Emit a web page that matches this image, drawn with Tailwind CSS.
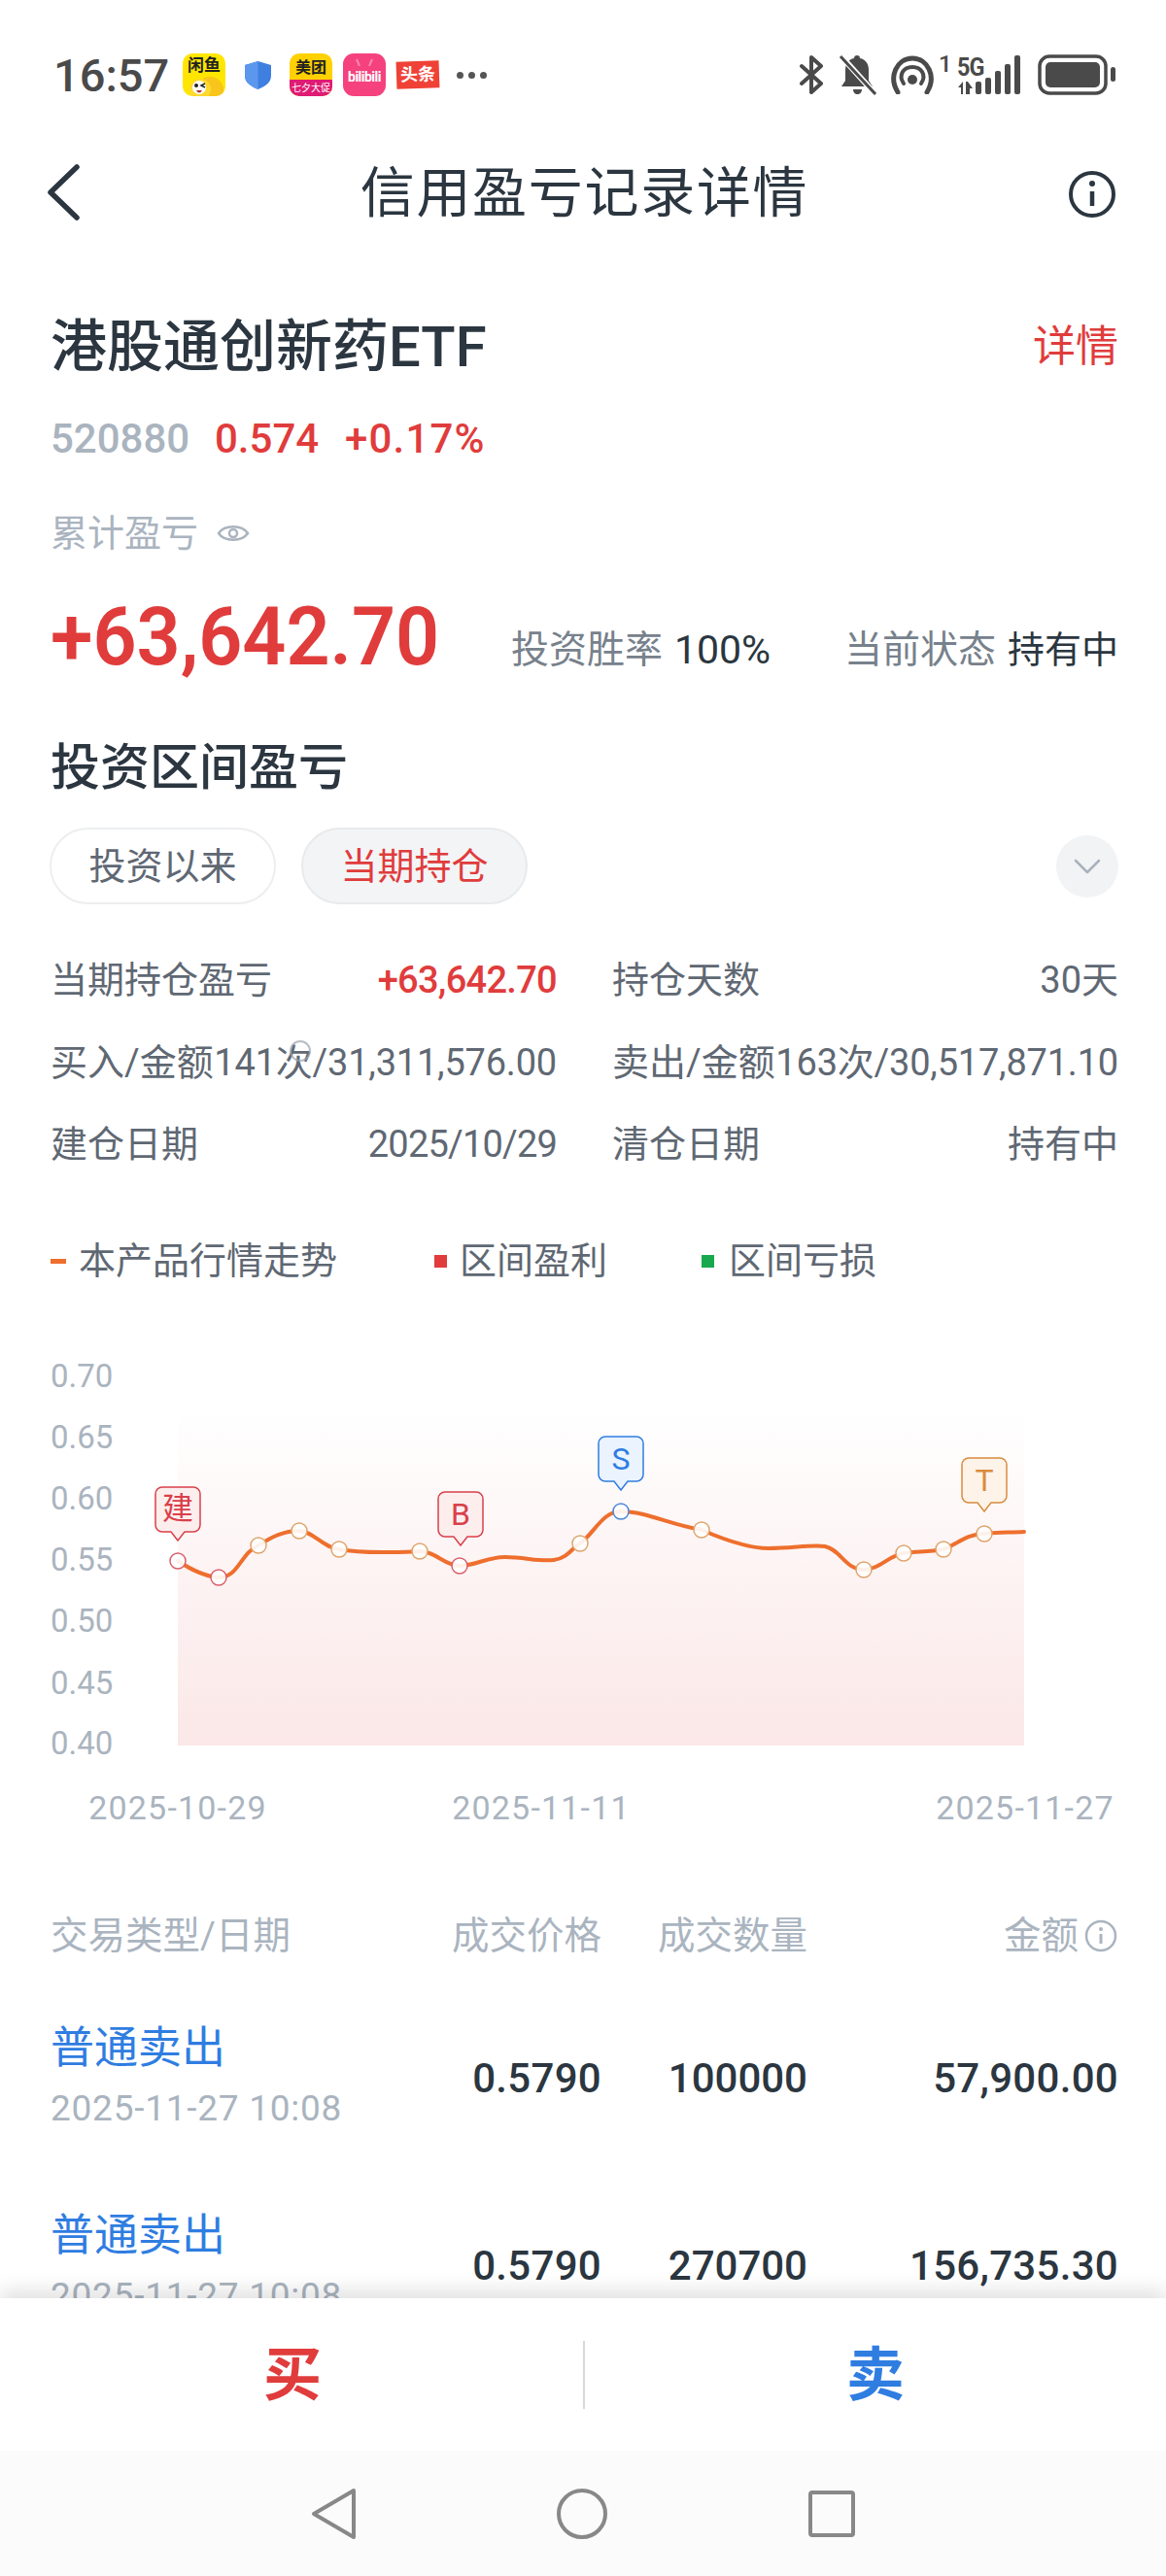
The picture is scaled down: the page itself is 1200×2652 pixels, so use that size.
<!DOCTYPE html>
<html lang="zh-CN">
<head>
  <meta charset="UTF-8" />
  <meta name="viewport" content="width=device-width, initial-scale=1.0"/>
  <script src="https://cdn.jsdelivr.net/npm/@tailwindcss/browser@4"></script>
  <title>信用盈亏记录详情</title>
</head>
<body class="bg-white">
<div class="w-[1200px] h-[2652px] flex flex-col overflow-hidden font-[Roboto,'Noto_Sans_CJK_SC',sans-serif] text-[#2b3640]">

  <!-- Status bar -->
  <div class="h-[154px] shrink-0 flex items-center relative">
    <span class="ml-[55px] w-[125px] text-[47px] font-medium text-[#4a4a4a] leading-none">16:57</span>
    <div class="ml-[8px] w-[44px] h-[44px] rounded-[10px] bg-[#ffe600] flex flex-col items-center overflow-hidden">
      <span class="text-[17px] font-bold leading-[19px] text-[#222] mt-[3px]">闲鱼</span>
      <svg width="40" height="22" viewBox="0 0 40 22"><circle cx="26" cy="16" r="14" fill="#f7c51c"/><circle cx="16" cy="15" r="11" fill="#ffd92e"/><circle cx="15" cy="13" r="7" fill="#fff"/><circle cx="12" cy="11" r="2" fill="#222"/><path d="M21 9l-4 2 4 2" stroke="#222" stroke-width="1.500" fill="none"/><path d="M12 16q3 5 6 0z" fill="#a33"/></svg>
    </div>
    <svg class="ml-[20px]" width="27" height="29" viewBox="0 0 27 29"><path d="M13.500 0L27 4v11c0 7-6 11-13.500 14C6 26 0 22 0 15V4z" fill="#3f7fe0"/><path d="M13.500 0L0 4v11c0 7 6 11 13.500 14z" fill="#5c97ee"/></svg>
    <div class="ml-[19px] w-[44px] h-[44px] rounded-[10px] bg-[#ffd100] flex flex-col items-center overflow-hidden">
      <span class="text-[16px] font-bold leading-[24px] text-[#222] mt-[3px]">美团</span>
      <span class="w-full h-[17px] bg-[#df1b73] text-white text-[10px] leading-[17px] text-center">七夕大促</span>
    </div>
    <div class="relative ml-[11px] w-[44px] h-[44px] rounded-[11px] bg-[#f5427e] flex items-center justify-center">
      <svg class="absolute left-[12px] top-[5px]" width="20" height="8" viewBox="0 0 20 8" fill="none" stroke="#ff86ac" stroke-width="2"><path d="M5 8L2 1M15 8l3-7"/></svg>
      <span class="mt-[3px] text-[14px] font-bold text-white leading-none tracking-[-0.5px]">bilibili</span>
    </div>
    <div class="ml-[11px] w-[44px] h-[28px] bg-[#ef4136] -rotate-2 flex items-center justify-center">
      <span class="text-[18px] font-bold text-white leading-none">头条</span>
    </div>
    <div class="ml-[18px] flex gap-[5px]">
      <span class="w-[7px] h-[7px] rounded-full bg-[#555]"></span>
      <span class="w-[7px] h-[7px] rounded-full bg-[#555]"></span>
      <span class="w-[7px] h-[7px] rounded-full bg-[#555]"></span>
    </div>

    <div class="ml-auto mr-[52px] flex items-center">
      <!-- bluetooth -->
      <svg width="27" height="40" viewBox="0 0 27 40" fill="none" stroke="#4a4a4a" stroke-width="4" stroke-linejoin="round" stroke-linecap="round"><path d="M3 11l20 18-10 9V2l10 9L3 29"/></svg>
      <!-- muted bell -->
      <svg class="ml-[14px]" width="39" height="44" viewBox="0 0 39 44"><path d="M19 2c2 0 3 1 3 3 6 1 9 6 9 12v11l4 6H3l4-6V17c0-6 3-11 9-12 0-2 1-3 3-3zM15 37h9c0 3-2 5-4.500 5S15 40 15 37z" fill="#4a4a4a"/><path d="M1 1l37 41" stroke="#fff" stroke-width="6"/><path d="M2 3l36 39" stroke="#4a4a4a" stroke-width="3"/></svg>
      <!-- hotspot -->
      <svg class="ml-[14px]" width="46" height="40" viewBox="0 0 46 40" fill="none" stroke="#4a4a4a" stroke-linecap="round"><path d="M8 38C-2 22 7 3 23 3s25 19 15 35" stroke-width="5"/><path d="M14 29C8 20 14 12 23 12s15 8 9 17" stroke-width="4"/><circle cx="23" cy="25" r="5" fill="#4a4a4a" stroke="none"/></svg>
      <div class="w-[23px] h-[40px] relative shrink-0">
        <span class="absolute left-[4px] top-[-3px] text-[24px] font-medium text-[#4a4a4a] leading-none">1</span>
      </div>
      <!-- 5G and signal -->
      <div class="relative w-[68px] h-[42px] shrink-0">
        <span class="absolute left-0 top-[0px] text-[26px] font-bold leading-none tracking-[-1px] text-[#4a4a4a] scale-x-90 origin-left">5G</span>
        <svg class="absolute left-0 top-0" width="68" height="42" viewBox="0 0 68 42" fill="#4a4a4a"><path d="M1 34l5-6v13H4v-7zM9 28h2l5 7h-3v6H9z"/><rect x="19" y="28" width="6" height="13" rx="2"/><rect x="29" y="24" width="6" height="17" rx="2"/><rect x="39" y="17" width="6" height="24" rx="2"/><rect x="49" y="10" width="6" height="31" rx="2"/><rect x="59" y="1" width="6" height="40" rx="2"/></svg>
      </div>
      <!-- battery -->
      <svg class="ml-[15px]" width="80" height="42" viewBox="0 0 80 42"><rect x="2" y="2" width="68" height="38" rx="10" fill="none" stroke="#4a4a4a" stroke-width="3.500"/><rect x="8" y="8" width="56" height="26" rx="5" fill="#4a4a4a"/><rect x="75" y="13" width="5" height="15" rx="2.500" fill="#4a4a4a"/></svg>
    </div>
  </div>

  <!-- Nav -->
  <div class="h-[88px] shrink-0 flex items-center justify-between pl-[46px] pr-[51px] relative">
    <svg width="38" height="60" viewBox="0 0 38 60" fill="none" stroke="#2b3640" stroke-width="5.500" stroke-linecap="round" stroke-linejoin="round"><path d="M33 4L6 30l27 26"/></svg>
    <h1 class="ml-[20px] mt-[2px] text-[56px] font-normal leading-none tracking-[1.700px]">信用盈亏记录详情</h1>
    <svg class="mt-[4px]" width="50" height="50" viewBox="0 0 50 50" fill="none" stroke="#2b3640"><circle cx="25" cy="25" r="22" stroke-width="4"/><path d="M25 22v15" stroke-width="4.500"/><circle cx="25" cy="14" r="3" fill="#2b3640" stroke="none"/></svg>
  </div>

  <!-- Scrollable content -->
  <main class="flex-1 overflow-hidden">
    <div class="pl-[52px] pr-[49px]">
      <div class="mt-[75px] h-[80px] flex items-center justify-between">
        <span class="text-[58px] font-medium leading-none">港股通创新药ETF</span>
        <span class="text-[44px] text-[#e03c3c] leading-none">详情</span>
      </div>
      <div class="mt-[30px] h-[50px] flex items-center text-[42px] font-medium leading-none">
        <span class="w-[169px] text-[#aab4bf]">520880</span>
        <span class="w-[134px] text-[#e03c3c]">0.574</span>
        <span class="text-[#e03c3c] tracking-[1.200px]">+0.17%</span>
      </div>
      <div class="mt-[50px] h-[44px] flex items-center text-[38px] text-[#aab4bf] leading-none">
        <span>累计盈亏</span>
        <svg class="ml-[19px]" width="34" height="24" viewBox="0 0 34 24" fill="none" stroke="#aab4bf" stroke-width="2.500"><path d="M2 12C8 3 26 3 32 12 26 21 8 21 2 12z"/><circle cx="17" cy="12" r="4"/></svg>
      </div>
      <div class="mt-[35px] h-[100px] flex items-center">
        <span class="w-[475px] text-[84px] font-semibold text-[#e03c3c] leading-none scale-x-[0.94] origin-left whitespace-nowrap">+63,642.70</span>
        <div class="pt-[26px] flex items-center text-[38px] leading-none whitespace-nowrap">
          <span class="w-[168px] text-[39px] text-[#77818c]">投资胜率</span>
          <span class="w-[175px] text-[41px] text-[#2b3640]">100%</span>
          <span class="w-[168px] text-[39px] text-[#77818c]">当前状态</span>
          <span class="text-[#2b3640]">持有中</span>
        </div>
      </div>
      <h2 class="mt-[54px] h-[60px] flex items-center text-[51px] font-medium leading-none">投资区间盈亏</h2>

      <div class="mt-[32px] -ml-[1px] h-[79px] flex items-center">
        <button class="w-[233px] h-[79px] rounded-full border-2 border-[#eceef0] text-[38px] text-[#5f6873] leading-none">投资以来</button>
        <button class="ml-[26px] w-[233px] h-[79px] rounded-full border-2 border-[#e8eaec] bg-[#f3f4f6] text-[38px] text-[#e03c3c] leading-none">当期持仓</button>
        <div class="ml-auto w-[64px] h-[64px] rounded-full bg-[#f2f3f5] flex items-center justify-center">
          <svg width="30" height="18" viewBox="0 0 30 18" fill="none" stroke="#a9b2bc" stroke-width="2.500" stroke-linecap="round" stroke-linejoin="round"><path d="M3 3l12 12L27 3"/></svg>
        </div>
      </div>

      <!-- Stats -->
      <div class="mt-[35px] grid grid-cols-[521px_521px] gap-x-[57px] text-[38px] text-[#5f6873] leading-none relative">
        <div class="h-[85px] flex items-center justify-between"><span>当期持仓盈亏</span><span class="text-[#e03c3c] font-medium tracking-[-0.700px]">+63,642.70</span></div>
        <div class="h-[85px] flex items-center justify-between"><span>持仓天数</span><span>30天</span></div>
        <div class="h-[85px] flex items-center justify-between"><span>买入/金额</span><span class="tracking-[-0.200px]">141次/31,311,576.00</span></div>
        <div class="h-[85px] flex items-center justify-between"><span>卖出/金额</span><span class="tracking-[-0.200px]">163次/30,517,871.10</span></div>
        <div class="h-[83px] flex items-center justify-between"><span>建仓日期</span><span class="tracking-[-0.800px]">2025/10/29</span></div>
        <div class="h-[83px] flex items-center justify-between"><span>清仓日期</span><span>持有中</span></div>
        <span class="absolute left-[246px] top-[105px] w-[22px] h-[22px] rounded-full border-2 border-[#9aa3ad]/70"></span>
      </div>

      <!-- Legend -->
      <div class="mt-[54px] h-[50px] flex items-center text-[38px] text-[#5f6873] leading-none">
        <span class="w-[16px] h-[5px] bg-[#ee6f2d]"></span>
        <span class="ml-[13px] w-[366px]">本产品行情走势</span>
        <span class="w-[13px] h-[13px] bg-[#e03c3c]"></span>
        <span class="ml-[13px] w-[249px]">区间盈利</span>
        <span class="w-[13px] h-[13px] bg-[#18a84e]"></span>
        <span class="ml-[15px]">区间亏损</span>
      </div>
    </div>

    <!-- Chart -->
    <svg class="mt-[47px] block" width="1200" height="520" viewBox="0 1370 1200 520">
      <defs>
        <linearGradient id="areaFill" x1="0" y1="0" x2="0" y2="1">
          <stop offset="0" stop-color="#ffffff"/>
          <stop offset="1" stop-color="#fbe7e7"/>
        </linearGradient>
      </defs>
      <rect x="183" y="1450" width="871" height="347" fill="url(#areaFill)"/>
      <path d="M183 1607C197 1616 210 1623 225 1624C245 1625 248 1598 266 1591C280 1582 292 1576 308 1576C322 1576 333 1594 349 1595C375 1600 410 1598 432 1597C448 1597 458 1612 473 1612C490 1612 500 1603 520 1603C540 1603 555 1608 570 1606C585 1604 590 1592 597 1589C612 1578 620 1556 639 1556C665 1556 690 1570 722 1575C745 1585 770 1594 791 1594C815 1594 835 1590 849 1592C865 1595 870 1616 889 1616C905 1616 915 1601 930 1599C945 1597 955 1598 971 1595C985 1590 995 1579 1013 1579C1025 1577 1040 1578 1054 1577" fill="none" stroke="#ee6f2d" stroke-width="4" stroke-linecap="round"/>

      <g fill="#ffffff" fill-opacity="0.9" stroke-width="1.500">
        <circle cx="183" cy="1607" r="8" stroke="#d9606a"/>
        <circle cx="225" cy="1624" r="8" stroke="#d9606a"/>
        <circle cx="266" cy="1591" r="8" stroke="#dfa56c"/>
        <circle cx="308" cy="1576" r="8" stroke="#dfa56c"/>
        <circle cx="349" cy="1595" r="8" stroke="#dfa56c"/>
        <circle cx="432" cy="1597" r="8" stroke="#dfa56c"/>
        <circle cx="473" cy="1612" r="8" stroke="#d9606a"/>
        <circle cx="597" cy="1589" r="8" stroke="#dfa56c"/>
        <circle cx="639" cy="1556" r="8" stroke="#4d85db"/>
        <circle cx="722" cy="1575" r="8" stroke="#dfa56c"/>
        <circle cx="889" cy="1616" r="8" stroke="#dfa56c"/>
        <circle cx="930" cy="1599" r="8" stroke="#dfa56c"/>
        <circle cx="971" cy="1595" r="8" stroke="#dfa56c"/>
        <circle cx="1013" cy="1579" r="8" stroke="#dfa56c"/>
      </g>

      <!-- y axis -->
      <g fill="#aab4bf" font-size="33" dominant-baseline="central">
        <text x="52" y="1416">0.70</text>
        <text x="52" y="1479">0.65</text>
        <text x="52" y="1542">0.60</text>
        <text x="52" y="1605">0.55</text>
        <text x="52" y="1668">0.50</text>
        <text x="52" y="1732">0.45</text>
        <text x="52" y="1794">0.40</text>
      </g>
      <!-- x axis -->
      <g fill="#aab4bf" font-size="34" letter-spacing="1.200" dominant-baseline="central" text-anchor="middle">
        <text x="183" y="1861">2025-10-29</text>
        <text x="557" y="1861">2025-11-11</text>
        <text x="1055" y="1861">2025-11-27</text>
      </g>

      <!-- trade markers -->
      <g stroke-width="1.500" text-anchor="middle" font-size="32" dominant-baseline="central">
        <path d="M167 1531h32a7 7 0 0 1 7 7v32a7 7 0 0 1-7 7h-9l-7 9-7-9h-9a7 7 0 0 1-7-7v-32a7 7 0 0 1 7-7z" fill="#fdeeee" stroke="#d9404a"/>
        <text x="183" y="1553" fill="#d9404a" stroke="none">建</text>
        <path d="M458 1536h32a7 7 0 0 1 7 7v32a7 7 0 0 1-7 7h-9l-7 9-7-9h-9a7 7 0 0 1-7-7v-32a7 7 0 0 1 7-7z" fill="#fdeeee" stroke="#d9404a"/>
        <text x="474" y="1559" fill="#d9404a" stroke="none">B</text>
        <path d="M623 1479h32a7 7 0 0 1 7 7v32a7 7 0 0 1-7 7h-9l-7 9-7-9h-9a7 7 0 0 1-7-7v-32a7 7 0 0 1 7-7z" fill="#eaf3fe" stroke="#2f7de1"/>
        <text x="639" y="1502" fill="#2f7de1" stroke="none">S</text>
        <path d="M997 1501h32a7 7 0 0 1 7 7v32a7 7 0 0 1-7 7h-9l-7 9-7-9h-9a7 7 0 0 1-7-7v-32a7 7 0 0 1 7-7z" fill="#fdf3e8" stroke="#d98c3f"/>
        <text x="1013" y="1524" fill="#d98c3f" stroke="none">T</text>
      </g>
    </svg>

    <!-- Trades table -->
    <div class="pl-[52px] pr-[49px]">
      <div class="mt-[78px] h-[50px] grid grid-cols-[1fr_154px_212px_320px] items-center text-[38.500px] text-[#aab4bf] leading-none">
        <span>交易类型/日期</span>
        <span class="text-right">成交价格</span>
        <span class="text-right">成交数量</span>
        <span class="flex items-center justify-end">金额
          <svg class="ml-[5px]" width="36" height="36" viewBox="0 0 36 36" fill="none" stroke="#aab4bf"><circle cx="18" cy="18" r="15" stroke-width="2.500"/><path d="M18 16v10" stroke-width="3"/><circle cx="18" cy="11" r="2" fill="#aab4bf" stroke="none"/></svg>
        </span>
      </div>
      <div class="mt-[25px]">
        <div class="h-[193px] grid grid-cols-[1fr_154px_212px_320px] items-center text-[42px] font-medium leading-none">
          <div>
            <div class="h-[62px] flex items-center text-[45px] font-normal text-[#2f7de1]">普通卖出</div>
            <div class="h-[62px] flex items-center text-[37px] font-normal text-[#aab4bf] tracking-[0.750px]">2025-11-27 10:08</div>
          </div>
          <span class="text-right tracking-[0.300px]">0.5790</span>
          <span class="text-right">100000</span>
          <span class="text-right tracking-[0.300px]">57,900.00</span>
        </div>
        <div class="h-[193px] grid grid-cols-[1fr_154px_212px_320px] items-center text-[42px] font-medium leading-none">
          <div>
            <div class="h-[62px] flex items-center text-[45px] font-normal text-[#2f7de1]">普通卖出</div>
            <div class="h-[62px] flex items-center text-[37px] font-normal text-[#aab4bf] tracking-[0.750px]">2025-11-27 10:08</div>
          </div>
          <span class="text-right tracking-[0.300px]">0.5790</span>
          <span class="text-right">270700</span>
          <span class="text-right tracking-[0.300px]">156,735.30</span>
        </div>
      </div>
    </div>
  </main>

  <!-- Buy / sell bar -->
  <div class="relative h-[157px] shrink-0 bg-white flex items-center pl-[2px] shadow-[0_-8px_20px_rgba(0,0,0,0.12)]">
    <div class="flex-1 pt-[2px] text-center text-[60px] font-bold text-[#e03c3c] leading-none">买</div>
    <div class="w-[2px] h-[70px] bg-[#d8d8d8]"></div>
    <div class="flex-1 pt-[2px] text-center text-[60px] font-bold text-[#2f7de1] leading-none">卖</div>
  </div>

  <!-- Android nav bar -->
  <div class="relative h-[129px] shrink-0 bg-[#fbfbfb] flex items-center justify-center">
    <svg width="46" height="54" viewBox="0 0 46 54" fill="none" stroke="#888" stroke-width="4" stroke-linejoin="round"><path d="M44 3v48L3 27z"/></svg>
    <svg class="ml-[206px]" width="54" height="54" viewBox="0 0 54 54" fill="none" stroke="#888" stroke-width="4"><circle cx="27" cy="27" r="24"/></svg>
    <svg class="ml-[206px]" width="48" height="48" viewBox="0 0 48 48" fill="none" stroke="#888" stroke-width="4" stroke-linejoin="round"><rect x="2" y="2" width="44" height="44" rx="2"/></svg>
  </div>
</div>
</body>
</html>
